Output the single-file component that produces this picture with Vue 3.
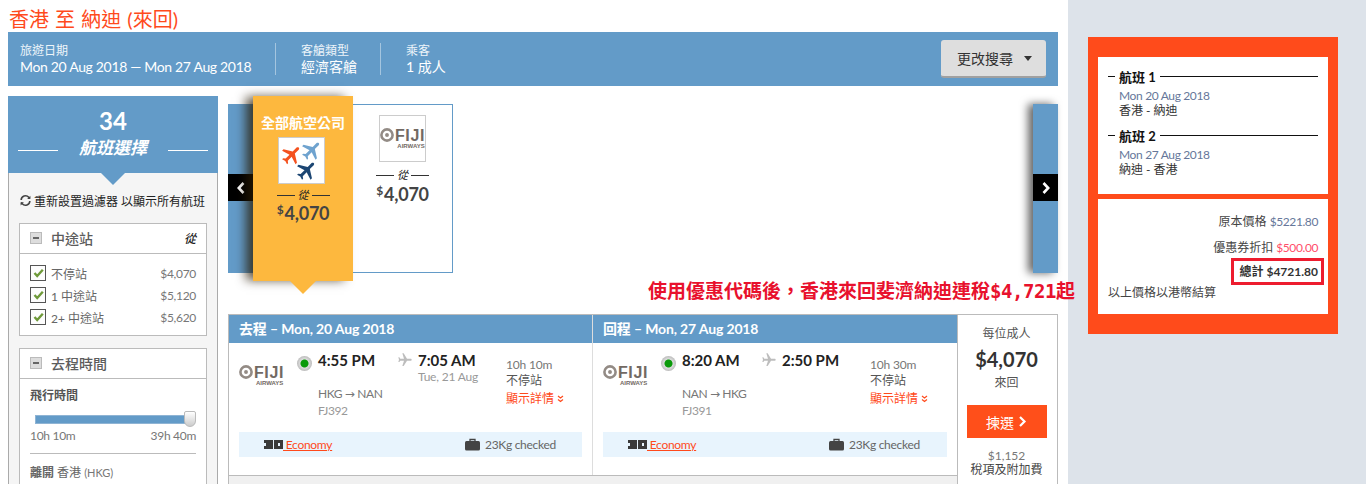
<script setup>
const stops = [
  { label: '不停站', price: '$4,070' },
  { label: '1 中途站', price: '$5,120' },
  { label: '2+ 中途站', price: '$5,620' }
]
const segments = [
  { head: '去程', date: 'Mon, 20 Aug 2018', dep: '4:55 PM', arr: '7:05 AM', next: 'Tue, 21 Aug', route: ['HKG', 'NAN'], no: 'FJ392', dur: '10h 10m' },
  { head: '回程', date: 'Mon, 27 Aug 2018', dep: '8:20 AM', arr: '2:50 PM', next: '', route: ['NAN', 'HKG'], no: 'FJ391', dur: '10h 30m' }
]
const trips = [
  { title: '航班 1', date: 'Mon 20 Aug 2018', route: '香港 - 納迪' },
  { title: '航班 2', date: 'Mon 27 Aug 2018', route: '納迪 - 香港' }
]
const plane = 'M21 16v-2l-8-5V3.5c0-.83-.67-1.5-1.5-1.5S10 2.67 10 3.5V9l-8 5v2l8-2.5V19l-2 1.5V22l3.5-1 3.5 1v-1.5L13 19v-5.5l8 2.5z'
</script>

<template>
  <div class="page">
    <main class="main">
      <h1 class="title">香港 至 納迪 (來回)</h1>

      <section class="summary">
        <div class="sum-item first">
          <span class="sum-label">旅遊日期</span>
          <span class="sum-value date">Mon 20 Aug 2018 — Mon 27 Aug 2018</span>
        </div>
        <div class="sum-item second">
          <span class="sum-label">客艙類型</span>
          <span class="sum-value">經濟客艙</span>
        </div>
        <div class="sum-item third">
          <span class="sum-label">乘客</span>
          <span class="sum-value">1 成人</span>
        </div>
        <button class="change">更改搜尋<i class="caret"></i></button>
      </section>

      <div class="content">
        <aside class="filters">
          <div class="count">
            <div class="count-num">34</div>
            <div class="count-label"><i></i><em>航班選擇</em><i></i></div>
          </div>
          <div class="filter-body">
            <div class="reset">
              <svg width="13" height="13" viewBox="0 0 24 24" fill="none" stroke="#444" stroke-width="3">
                <path d="M4 11a8 8 0 0 1 14-5l2 2M20 13a8 8 0 0 1-14 5l-2-2" />
                <path d="M21 3v6h-6M3 21v-6h6" fill="#444" stroke="none" />
              </svg>
              <span>重新設置過濾器 以顯示所有航班</span>
            </div>

            <div class="box">
              <div class="box-head">
                <i class="minus"></i><span>中途站</span><em class="from">從</em>
              </div>
              <div class="stops">
                <div v-for="s in stops" :key="s.label" class="stop">
                  <span class="check">
                    <svg width="11" height="10" viewBox="0 0 11 10"><path d="M1.5 5 4.2 8 9.8 1.8" fill="none" stroke="#6f9a3a" stroke-width="2.4" /></svg>
                  </span>
                  <span class="stop-label">{{ s.label }}</span>
                  <span class="stop-price">{{ s.price }}</span>
                </div>
              </div>
            </div>

            <div class="box">
              <div class="box-head"><i class="minus"></i><span>去程時間</span></div>
              <div class="times">
                <div class="t-title">飛行時間</div>
                <div class="slider"><i class="knob"></i></div>
                <div class="range"><span>10h 10m</span><span>39h 40m</span></div>
                <div class="t-leave"><b>離開</b> 香港 <small>(HKG)</small></div>
              </div>
            </div>
          </div>
        </aside>

        <div class="results">
          <div class="carousel">
            <div class="edge left"><span class="nav"><svg width="10" height="12" viewBox="0 0 10 12"><path d="M7.5 1 2.8 6l4.7 5" fill="none" stroke="#fff" stroke-width="2.6" /></svg></span></div>
            <div class="air-card active">
              <div class="air-name">全部航空公司</div>
              <div class="air-logo">
                <svg width="45" height="45" viewBox="0 0 45 45">
                  <path :d="plane" fill="#f4511e" transform="translate(1 5) rotate(45 12 12)" />
                  <path :d="plane" fill="#6fa3cf" transform="translate(21 .5) rotate(45 12 12)" />
                  <path :d="plane" fill="#1c4673" transform="translate(16 20.5) rotate(45 12 12)" />
                </svg>
              </div>
              <div class="from-line"><i></i><em>從</em><i></i></div>
              <div class="air-price"><sup>$</sup>4,070</div>
              <span class="pointer"></span>
            </div>
            <div class="air-card plain">
              <div class="air-logo fiji-box">
                <div class="fiji">
                  <div class="fiji-row">
                    <svg width="14" height="14" viewBox="0 0 13 13"><circle cx="6.5" cy="6.5" r="5.2" fill="none" stroke="#938b85" stroke-width="2.4" /><circle cx="6.5" cy="6.5" r="1.8" fill="#938b85" /></svg>
                    <b>FIJI</b>
                  </div>
                  <span>AIRWAYS</span>
                </div>
              </div>
              <div class="from-line"><i></i><em>從</em><i></i></div>
              <div class="air-price"><sup>$</sup>4,070</div>
            </div>
            <div class="spacer"></div>
            <div class="edge right"><span class="nav"><svg width="10" height="12" viewBox="0 0 10 12"><path d="M2.5 1 7.2 6l-4.7 5" fill="none" stroke="#fff" stroke-width="2.6" /></svg></span></div>
          </div>

          <div class="deal">
            <div class="legs-wrap">
              <div class="legs">
                <article v-for="seg in segments" :key="seg.no" class="leg">
                  <header class="leg-head">{{ seg.head }} – {{ seg.date }}</header>
                  <div class="leg-body">
                    <div class="fiji">
                      <div class="fiji-row">
                        <svg width="14" height="14" viewBox="0 0 13 13"><circle cx="6.5" cy="6.5" r="5.2" fill="none" stroke="#938b85" stroke-width="2.4" /><circle cx="6.5" cy="6.5" r="1.8" fill="#938b85" /></svg>
                        <b>FIJI</b>
                      </div>
                      <span>AIRWAYS</span>
                    </div>
                    <i class="dot"></i>
                    <div class="col-dep">
                      <div class="time">{{ seg.dep }}</div>
                      <div class="route">{{ seg.route[0] }} <span class="arrow">→</span> {{ seg.route[1] }}</div>
                      <div class="flight-no">{{ seg.no }}</div>
                    </div>
                    <svg class="fly" width="16" height="16" viewBox="0 0 24 24"><path :d="plane" fill="#bdbdbd" transform="rotate(90 12 12)" /></svg>
                    <div class="col-arr">
                      <div class="time">{{ seg.arr }}</div>
                      <div class="next">{{ seg.next }}</div>
                    </div>
                    <div class="col-dur">
                      <div class="dur">{{ seg.dur }}</div>
                      <div class="nonstop">不停站</div>
                      <div class="details">顯示詳情 <svg width="7" height="8" viewBox="0 0 7 8"><path d="M1 1l2.5 2L6 1M1 4.5l2.5 2L6 4.5" fill="none" stroke="#ff4a1c" stroke-width="1.2" /></svg></div>
                    </div>
                  </div>
                  <div class="strip">
                    <span class="seat"><i></i><i></i></span>
                    <a class="eco">&nbsp;Economy</a>
                    <svg class="bag" width="15" height="13" viewBox="0 0 15 13"><path d="M5 3V1.5h5V3" fill="none" stroke="#444" stroke-width="1.3" /><rect y="3" width="15" height="9.5" rx="1.5" fill="#444" /></svg>
                    <span class="weight">23Kg checked</span>
                  </div>
                </article>
              </div>
              <div class="legs-foot"></div>
            </div>
            <div class="price-col">
              <div class="per">每位成人</div>
              <div class="amount">$4,070</div>
              <div class="round">來回</div>
              <button class="pick">揀選<svg width="9" height="11" viewBox="0 0 9 11"><path d="M2 1l4.5 4.5L2 10" fill="none" stroke="#fff" stroke-width="2.2" /></svg></button>
              <div class="tax">$1,152</div>
              <div class="tax-label">稅項及附加費</div>
            </div>
          </div>
        </div>
      </div>

      <p class="promo">使用優惠代碼後，香港來回斐濟納迪連稅<span class="promo-num">$4,721</span>起</p>
    </main>

    <aside class="side">
      <div class="panel">
        <div class="panel-card trips">
          <div v-for="t in trips" :key="t.title" class="trip">
            <div class="trip-title"><i class="short"></i><b>{{ t.title }}</b><i class="long"></i></div>
            <div class="trip-date">{{ t.date }}</div>
            <div class="trip-route">{{ t.route }}</div>
          </div>
        </div>
        <div class="panel-card totals">
          <div class="line">原本價格 <span class="blue">$5221.80</span></div>
          <div class="line">優惠券折扣 <span class="red">$500.00</span></div>
          <div class="total-row"><div class="total">總計 $4721.80</div></div>
          <div class="note">以上價格以港幣結算</div>
        </div>
      </div>
    </aside>
  </div>
</template>

<style>
html, body { margin: 0; background: #fff; overflow: hidden; }
</style>

<style scoped>
* { box-sizing: border-box; }
.page {
  display: flex;
  width: 1366px;
  height: 484px;
  overflow: hidden;
  font-family: Lato, "Noto Sans CJK TC", sans-serif;
  color: #444;
}
.main { position: relative; width: 1068px; flex: none; padding: 0 10px 0 8px; background: #fff; }
.title { margin: 0; height: 32px; padding-left: 1px; font-size: 20px; line-height: 38px; word-spacing: 1px; font-weight: 400; color: #ff4a1c; white-space: nowrap; }

.summary { display: flex; align-items: center; height: 54px; background: #639bc8; color: #fff; }
.sum-item { display: flex; flex-direction: column; height: 32px; justify-content: center; white-space: nowrap; }
.sum-item.first { width: 268px; padding-left: 12px; border-right: 1px solid #a4c5df; }
.sum-item.second { width: 105px; padding-left: 25px; border-right: 1px solid #a4c5df; }
.sum-item.third { padding-left: 25px; }
.sum-label { font-size: 12px; line-height: 15px; color: #eef5fa; }
.sum-value { font-size: 14px; line-height: 18px; }
.sum-value.date { letter-spacing: -.33px; }
.change {
  margin-left: auto; margin-right: 12px; width: 105px; height: 38px;
  border: 0; border-bottom: 2px solid #a0a0a0; border-radius: 3px;
  background: #dedede; color: #333; font: 14px Lato, "Noto Sans CJK TC", sans-serif;
  display: flex; align-items: center; padding: 0 0 0 16px;
}
.caret { margin-left: 11px; border: 4.5px solid transparent; border-top: 5px solid #333; border-bottom: 0; }

.content { display: flex; gap: 10px; margin-top: 10px; align-items: flex-start; }
.filters { width: 210px; flex: none; }
.count { height: 77px; background: #639bc8; color: #fff; text-align: center; position: relative; padding-top: 10px; }
.count::after {
  content: ""; position: absolute; left: 93px; bottom: -12px;
  border: 12px solid transparent; border-top: 12px solid #639bc8; border-bottom: 0;
}
.count-num { font-size: 24px; font-weight: 700; line-height: 30px; }
.count-label { display: flex; align-items: center; justify-content: space-between; padding: 0 10px; }
.count-label i { width: 40px; height: 1px; background: #fff; position: relative; top: 2px; }
.count-label em { font-size: 17px; font-weight: 700; line-height: 24px; }
.filter-body { background: #f5f5f5; border: 1px solid #aaa; border-top: 0; padding: 0 10px; height: 320px; }
.reset { display: flex; align-items: center; gap: 2px; height: 50px; padding-left: 0; padding-top: 5px; font-size: 12px; color: #222; white-space: nowrap; }
.box { background: #fff; border: 1px solid #bbb; margin-bottom: 12px; }
.box-head { display: flex; align-items: center; height: 30px; padding: 0 10px 2px; border-bottom: 1px solid #bbb; font-size: 14px; font-weight: 500; color: #5c5c5c; }
.minus { width: 12px; height: 12px; background: #ddd; border: 1px solid #bbb; margin-right: 9px; position: relative; flex: none; }
.minus::after { content: ""; position: absolute; left: 2px; top: 4px; width: 6px; height: 2px; background: #666; }
.from { margin-left: auto; font-size: 12px; color: #222; }
.stops { padding: 8px 10px 7px; }
.stop { display: flex; align-items: center; height: 22px; font-size: 12px; color: #666; }
.check { width: 16px; height: 16px; border: 1px solid #555; display: flex; align-items: center; justify-content: center; margin-right: 5px; background: #fdfdfd; }
.stop-price { margin-left: auto; color: #777; letter-spacing: -.3px; }
.times { padding: 7px 10px; }
.t-title { font-size: 12px; font-weight: 700; color: #555; line-height: 20px; }
.slider { position: relative; height: 9px; margin: 9px 0 0 5px; width: 160px; background: #639bc8; border: 1px solid #8fb4d4; }
.knob { position: absolute; right: -2px; top: -5px; width: 12px; height: 16px; background: linear-gradient(#fff, #ccc); border: 1px solid #bbb; border-radius: 2px 2px 6px 6px; }
.range { display: flex; justify-content: space-between; font-size: 12px; color: #777; letter-spacing: -.3px; line-height: 16px; margin-top: 4px; padding-bottom: 9px; border-bottom: 1px solid #bbb; }
.t-leave { font-size: 12px; color: #666; margin-top: 10px; line-height: 18px; }
.t-leave small { font-size: 11px; color: #777; }

.results { flex: 1; min-width: 0; padding-top: 8px; }
.carousel { display: flex; height: 169px; }
.edge { width: 25px; background: #639bc8; display: flex; align-items: center; flex: none; padding-bottom: 11px; }
.edge.right { box-shadow: -5px 0 9px rgba(0, 0, 0, .6); }
.edge .nav { width: 25px; height: 27px; background: #000; display: flex; align-items: center; justify-content: center; margin-top: 9px; }
.air-card { width: 100px; flex: none; text-align: center; position: relative; }
.air-card.active { height: 185px; margin-top: -8px; background: #fdb83e; box-shadow: -8px 0 10px -1px rgba(40, 25, 0, .75); padding-top: 18px; z-index: 2; }
.air-card.plain { background: #fff; border: 1px solid #639bc8; border-left: 0; padding-top: 10px; }
.air-name { font-size: 14px; font-weight: 700; color: #fff; line-height: 18px; white-space: nowrap; }
.air-logo { width: 47px; height: 47px; margin: 5px 0 0 25px; background: #fff; border: 1px solid #ccc; display: flex; align-items: center; justify-content: center; }
.fiji-box { margin: 0 auto; }
.from-line { display: flex; align-items: center; justify-content: center; gap: 3px; height: 14px; margin-top: 4px; color: #222; }
.plain .from-line { margin-top: 6px; }
.from-line i { width: 18px; height: 1px; background: #333; }
.from-line em { font-size: 11px; line-height: 14px; }
.air-price { font-size: 18px; font-weight: 700; color: #444; letter-spacing: -.2px; line-height: 22px; margin-top: 0; white-space: nowrap; }
.plain .air-price { margin-top: 1px; }
.air-price sup { font-size: 12px; line-height: 0; vertical-align: 6px; margin-right: 1px; }
.pointer { position: absolute; left: 37px; bottom: -13px; border: 13px solid transparent; border-top: 13px solid #fdb83e; border-bottom: 0; }
.spacer { flex: 1; }

.fiji { color: #726963; line-height: 1; width: 45px; flex: none; }
.fiji-row { display: flex; align-items: center; gap: 1px; }
.fiji b { font: 700 16px "Liberation Sans", sans-serif; letter-spacing: .6px; line-height: 13px; }
.fiji span { display: block; font: 700 6px "Liberation Sans", sans-serif; margin-top: 1px; padding-left: 17px; white-space: nowrap; }

.deal { display: flex; margin-top: 41px; border: 1px solid #bbb; border-bottom: 0; height: 180px; }
.legs-wrap { width: 728px; flex: none; display: flex; flex-direction: column; }
.legs { display: flex; height: 160px; flex: none; }
.legs-foot { flex: 1; background: #f0f0f0; border-top: 1px solid #bbb; }
.leg { width: 364px; flex: none; border-right: 1px solid #ddd; }
.leg:last-child { border-right: 0; }
.leg-head { height: 28px; background: #639bc8; color: #fff; font-size: 14px; font-weight: 700; letter-spacing: -.15px; line-height: 28px; padding-left: 10px; }
.leg-body { display: flex; height: 89px; padding: 7px 0 0 10px; align-items: flex-start; }
.leg-body .fiji { margin-top: 15px; width: 46px; }
.dot { width: 15px; height: 15px; flex: none; border-radius: 50%; margin: 6px 6px 0 12px; background: radial-gradient(circle, #0a9a0a 0 3.5px, #ddd 4.5px, #999 100%); }
.col-dep { width: 79px; flex: none; }
.time { font-size: 15px; font-weight: 700; color: #222; line-height: 20px; white-space: nowrap; }
.route { font-size: 12px; color: #777; letter-spacing: -.4px; line-height: 16px; margin-top: 16px; white-space: nowrap; }
.arrow { font-family: "DejaVu Sans", sans-serif; }
.flight-no { font-size: 12px; color: #999; letter-spacing: -.4px; line-height: 16px; margin-top: 1px; }
.fly { flex: none; margin: 2px 5px 0 0; }
.col-arr { width: 88px; flex: none; }
.next { font-size: 12px; color: #999; letter-spacing: -.2px; line-height: 14px; white-space: nowrap; }
.col-dur { font-size: 12px; color: #777; padding-top: 7px; }
.dur { line-height: 16px; letter-spacing: -.2px; }
.nonstop { color: #555; line-height: 18px; margin-top: -1px; }
.details { color: #ff4a1c; line-height: 18px; }
.strip { display: flex; align-items: center; height: 25px; margin: 0 10px; background: #e8f4fd; padding-left: 25px; font-size: 12px; }
.seat { display: flex; gap: 1px; }
.seat i { width: 9px; height: 9px; background: #3a3a3a; position: relative; }
.seat i::after { content: ""; position: absolute; width: 2px; height: 3px; top: 3px; left: 0; background: #e8f4fd; }
.seat i:last-child::after { left: 4px; }
.eco { color: #ff4a1c; text-decoration: underline; letter-spacing: -.3px; width: 182px; }
.bag { flex: none; }
.weight { margin-left: 5px; color: #666; letter-spacing: -.3px; white-space: nowrap; }

.price-col { flex: 1; min-width: 0; border-left: 1px solid #bbb; text-align: center; padding: 11px 2px 0 0; }
.per { font-size: 12px; color: #555; line-height: 16px; }
.amount { font-size: 20px; font-weight: 700; color: #333; line-height: 24px; margin-top: 5px; }
.round { font-size: 12px; color: #555; line-height: 18px; margin-top: 3px; }
.pick {
  display: flex; align-items: center; justify-content: center; gap: 4px;
  width: 80px; height: 33px; margin: 13px auto 0; border: 0; background: #ff4f1a; color: #fff;
  font: 14px Lato, "Noto Sans CJK TC", sans-serif;
}
.tax { font-size: 12px; color: #777; line-height: 14px; margin-top: 11px; }
.tax-label { font-size: 12px; color: #444; line-height: 14px; }

.promo { position: absolute; left: 648px; top: 279px; margin: 0; font-size: 19px; font-weight: 700; line-height: 24px; color: #e8112d; white-space: nowrap; font-family: "DejaVu Sans Mono", "Noto Sans CJK TC", sans-serif; z-index: 3; }
.promo-num { letter-spacing: -.45px; }

.side { flex: 1; background: #dde3ea; padding: 37px 28px 0 20px; }
.panel { height: 297px; background: #ff4b1b; padding: 20px 10px; display: flex; flex-direction: column; gap: 5px; }
.panel-card { background: #fff; padding: 0 10px; }
.trips { height: 137px; padding-top: 9px; }
.trip { margin-bottom: 7px; }
.trip-title { display: flex; align-items: center; height: 20px; font-size: 13px; color: #111; }
.trip-title i { height: 1px; background: #111; }
.short { width: 7px; margin-right: 4px; }
.long { flex: 1; margin-left: 4px; }
.trip-date { padding-left: 11px; font-size: 12px; color: #66779a; letter-spacing: -.35px; line-height: 15px; margin-top: 2px; }
.trip-route { padding-left: 11px; font-size: 12px; color: #333; line-height: 15px; }
.totals { height: 115px; padding-top: 15px; font-size: 12px; color: #444; }
.line { text-align: right; line-height: 16px; margin-bottom: 10px; white-space: nowrap; }
.blue { color: #66779a; letter-spacing: -.4px; }
.red { color: #ff4f6a; letter-spacing: -.4px; }
.total-row { display: flex; justify-content: flex-end; margin: -8px -6px 0 0; }
.total { border: 3px solid #ed1c2e; height: 27px; width: 93px; line-height: 21px; text-align: right; font-weight: 700; padding-right: 3px; color: #333; white-space: nowrap; }
.note { line-height: 16px; margin-top: 0; }
</style>
